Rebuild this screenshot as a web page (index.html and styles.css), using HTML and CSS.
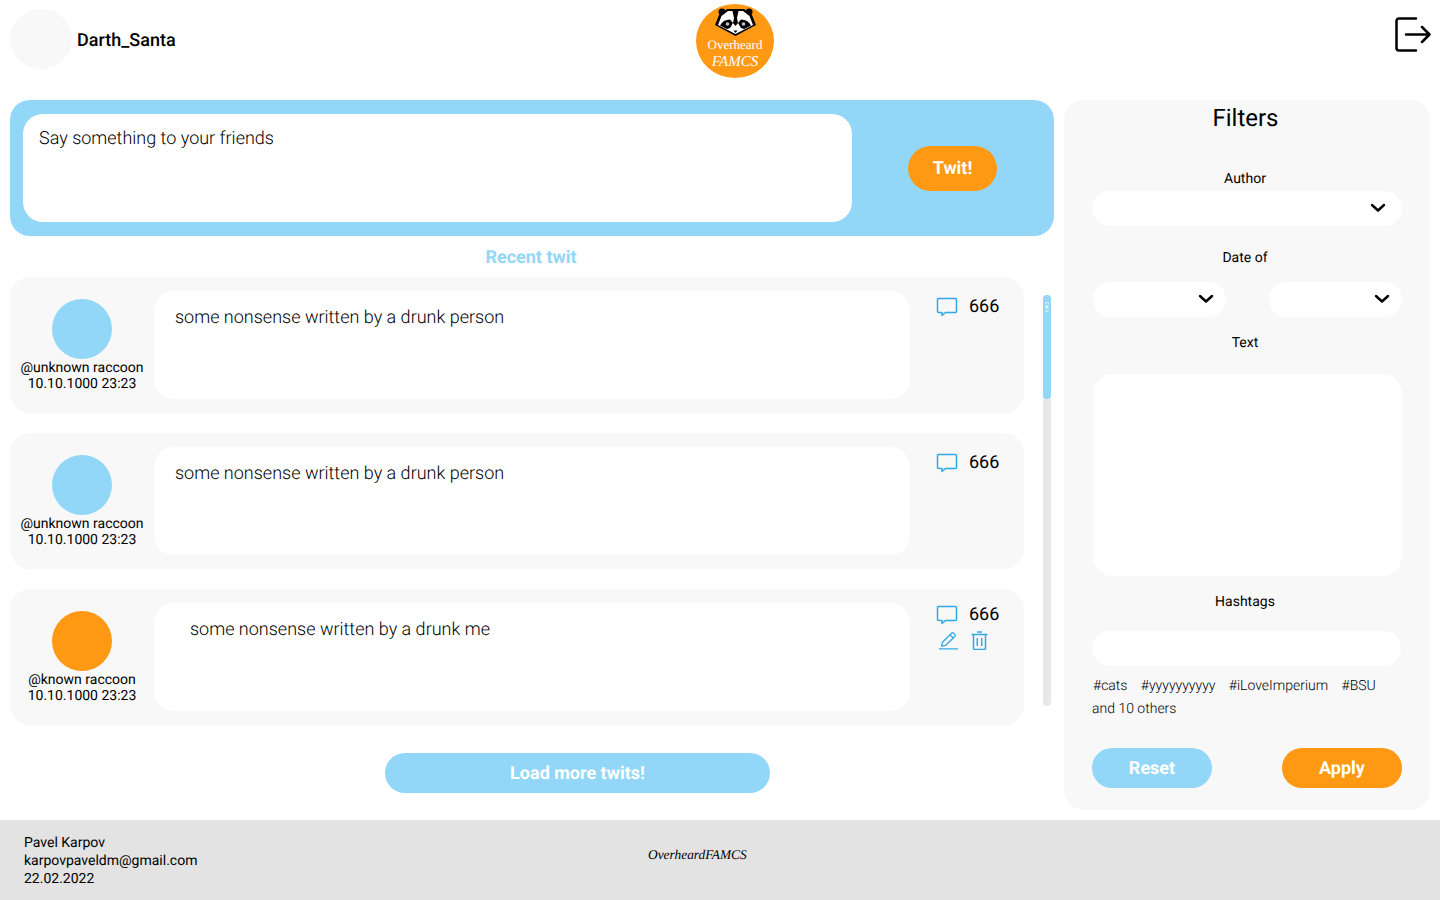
FILE: index.html
```html
<!DOCTYPE html>
<html lang="en">
<head>
<meta charset="utf-8">
<title>Overheard FAMCS</title>
<link rel="stylesheet" href="styles.css">
</head>
<body>
<svg class="defs" width="0" height="0" aria-hidden="true">
  <defs>
    <symbol id="i-comment" viewBox="0 0 22 20"><path d="M2.500 1.500h17a1 1 0 0 1 1 1v12a1 1 0 0 1-1 1H9.500l-3.500 3v-3H2.500a1 1 0 0 1-1-1v-12a1 1 0 0 1 1-1z" fill="none" stroke="#2fa9e6" stroke-width="1.500" stroke-linejoin="round"/></symbol>
    <symbol id="i-chev" viewBox="0 0 16 10"><path d="M2 2l6 5.500L14 2" fill="none" stroke="#000" stroke-width="2.400" stroke-linecap="round" stroke-linejoin="round"/></symbol>
  </defs>
</svg>
<header class="top">
  <div class="user"><div class="user-pic"></div><span class="user-name">Darth_Santa</span></div>
  <div class="logo">
    <svg class="logo-face" viewBox="0 0 41 29" width="41" height="29">
      <circle cx="7" cy="4" r="3.500" fill="#000"/><circle cx="34" cy="4" r="3.500" fill="#000"/>
      <path d="M4 7l8-6h17l8 6 4 10-20.500 11L0 17z" fill="#000"/>
      <path d="M6.500 8l6.500-5h15l6.500 5L38 17 20.500 26 3 17z" fill="#fff"/>
      <path d="M17 1h7l-2 9 1 5-2.500 3-2.500-3 1-5z" fill="#000"/>
      <path d="M5 17.500q3-6 10-6l3 3.500-3 5-3 1zM36 17.500q-3-6-10-6l-3 3.500 3 5 3 1z" fill="#000"/>
      <circle cx="12.500" cy="16" r="1.800" fill="#b9c6d2"/><circle cx="28.500" cy="16" r="1.800" fill="#b9c6d2"/>
      <path d="M18.500 22.500h4l-2 2.500z" fill="#000"/>
    </svg>
    <span class="logo-a">Overheard</span>
    <span class="logo-b">FAMCS</span>
  </div>
  <svg class="exit" viewBox="0 0 36 36" width="36" height="36"><path d="M21 1.500H4a2.500 2.500 0 0 0-2.500 2.500v27A2.500 2.500 0 0 0 4 33.500h17M11 17.500h23.500M27 10l7.500 7.500L27 25" fill="none" stroke="#000" stroke-width="2.500" stroke-linecap="round" stroke-linejoin="round"/></svg>
</header>
<main class="main">
  <section class="feed">
    <form class="composer">
      <div class="composer-box">Say something to your friends</div>
      <button class="btn btn-twit" type="button">Twit!</button>
    </form>
    <h2 class="recent">Recent twit</h2>
    <div class="list-wrap">
      <div class="list">
        <article class="card">
          <div class="who"><div class="pic pic-blue"></div><div class="who-text">@unknown raccoon<br>10.10.1000 23:23</div></div>
          <div class="msg">some nonsense written by a drunk person</div>
          <div class="side"><div class="count"><svg class="ico-c"><use href="#i-comment"/></svg><span>666</span></div></div>
        </article>
        <article class="card">
          <div class="who"><div class="pic pic-blue"></div><div class="who-text">@unknown raccoon<br>10.10.1000 23:23</div></div>
          <div class="msg">some nonsense written by a drunk person</div>
          <div class="side"><div class="count"><svg class="ico-c"><use href="#i-comment"/></svg><span>666</span></div></div>
        </article>
        <article class="card">
          <div class="who"><div class="pic pic-orange"></div><div class="who-text">@known raccoon<br>10.10.1000 23:23</div></div>
          <div class="msg msg-own">some nonsense written by a drunk me</div>
          <div class="side side-own"><div class="count"><svg class="ico-c"><use href="#i-comment"/></svg><span>666</span></div>
            <div class="tools">
              <svg class="ico-e" viewBox="0 0 20 19" width="20" height="19"><path d="M1 17.800h19M3.500 15.200l1-4L13.500 2.200a1.500 1.500 0 0 1 2.100 0l1.200 1.200a1.500 1.500 0 0 1 0 2.100L7.700 14.300zM12 3.800l3.300 3.300" fill="none" stroke="#2fa9e6" stroke-width="1.300" stroke-linejoin="round"/></svg>
              <svg class="ico-t" viewBox="0 0 17 19" width="17" height="19"><path d="M.5 3.500h16M6 1h5M2.500 3.500v13.700a1.300 1.300 0 0 0 1.300 1.300h9.400a1.300 1.300 0 0 0 1.300-1.300V3.500M6.300 7v8M10.700 7v8" fill="none" stroke="#2fa9e6" stroke-width="1.500"/></svg>
            </div>
          </div>
        </article>
      </div>
      <div class="scroll"><div class="thumb"><svg class="grip" viewBox="0 0 6 12" width="6" height="12"><path d="M1 3l2-2 2 2M1 9l2 2 2-2" fill="none" stroke="#e4f5fd" stroke-width="1"/><circle cx="3" cy="6" r="1.700" fill="#e4f5fd"/></svg></div></div>
    </div>
    <div class="more"><button class="btn btn-more" type="button">Load more twits!</button></div>
  </section>
  <aside class="filters">
    <h2 class="f-title">Filters</h2>
    <div class="f-label f-author">Author</div>
    <div class="pill pill-wide"><svg class="chev"><use href="#i-chev"/></svg></div>
    <div class="f-label f-date">Date of</div>
    <div class="date-row">
      <div class="pill pill-date"><svg class="chev"><use href="#i-chev"/></svg></div>
      <div class="pill pill-date"><svg class="chev"><use href="#i-chev"/></svg></div>
    </div>
    <div class="f-label f-text">Text</div>
    <div class="textbox"></div>
    <div class="f-label f-hash">Hashtags</div>
    <div class="pill pill-tag"></div>
    <div class="tags"><span>#cats</span><span>#yyyyyyyyyy</span><span>#iLoveImperium</span><span>#BSU</span></div>
    <div class="others">and 10 others</div>
    <div class="actions">
      <button class="btn btn-reset" type="button">Reset</button>
      <button class="btn btn-apply" type="button">Apply</button>
    </div>
  </aside>
</main>
<footer class="foot">
  <div class="foot-info">Pavel Karpov<br>karpovpaveldm@gmail.com<br>22.02.2022</div>
  <div class="foot-brand">OverheardFAMCS</div>
</footer>
</body>
</html>
```
FILE: styles.css
```css
* { box-sizing: border-box; }
html, body { margin: 0; padding: 0; }
body { width: 1440px; height: 900px; overflow: hidden; background: #fff; font-family: Roboto, sans-serif; color: #000; display: flex; flex-direction: column; text-rendering: geometricPrecision; }
.defs { position: absolute; }
.top { height: 100px; flex: none; display: flex; justify-content: space-between; align-items: flex-start; padding: 0 9px 0 10px; position: relative; }
.user { display: flex; align-items: center; margin-top: 9px; }
.user-pic { width: 62px; height: 60px; border-radius: 50%; background: #f8f8f8; }
.user-name { margin: 2px 0 0 5px; font-size: 18px; font-weight: 500; }
.logo { position: absolute; left: 696px; top: 4px; width: 78px; height: 74px; border-radius: 50%; background: #ff9914; display: flex; flex-direction: column; align-items: center; color: #fff; font-family: "Liberation Serif", serif; }
.logo-face { margin-top: 4px; flex: none; }
.logo-a { font-size: 13px; line-height: 14px; margin-top: 1px; }
.logo-b { font-size: 15px; line-height: 17px; margin-top: 2px; font-style: italic; }
.exit { margin-top: 17px; }
.main { flex: none; height: 720px; display: flex; align-items: flex-start; padding: 0 10px; gap: 10px; }
.feed { width: 1044px; flex: none; }
.composer { height: 136px; border-radius: 20px; background: #92d7f7; display: flex; align-items: center; padding: 0 57px 0 13px; justify-content: space-between; }
.composer-box { width: 829px; height: 108px; background: #fff; border-radius: 20px; padding: 14px 16px; font-size: 18px; font-weight: 300; line-height: 22px; }
.btn { border: 0; color: #fff; font-family: Roboto, sans-serif; font-weight: 700; font-size: 18px; padding: 0; text-rendering: geometricPrecision; }
.btn-twit { width: 89px; height: 45px; border-radius: 23px; background: #ff9914; padding-top: 1px; }
.recent { margin: 0; height: 41px; font-size: 18px; line-height: 44px; font-weight: 700; color: #92d7f7; text-align: center; padding-right: 2px; }
.list-wrap { display: flex; align-items: flex-start; }
.list { width: 1014px; display: flex; flex-direction: column; gap: 20px; }
.card { height: 136px; background: #f8f8f8; border-radius: 20px; display: flex; position: relative; }
.who { width: 144px; flex: none; padding-top: 22px; display: flex; flex-direction: column; align-items: center; }
.pic { width: 60px; height: 60px; border-radius: 50%; }
.pic-blue { background: #92d7f7; }
.pic-orange { background: #ff9914; }
.who-text { padding-top: 1px; font-size: 14px; line-height: 16px; text-align: center; white-space: nowrap; }
.msg { width: 756px; height: 108px; margin-top: 14px; background: #fff; border-radius: 20px; padding: 15px 21px; font-size: 18px; font-weight: 300; line-height: 24px; flex: none; }
.msg-own { padding-left: 36px; }
.side { margin-left: 26px; padding-top: 19px; }
.side-own { padding-top: 15px; }
.count { display: flex; align-items: center; height: 20px; font-size: 18px; gap: 11px; }
.ico-c { width: 22px; height: 20px; margin-top: 2px; }
.tools { display: flex; align-items: flex-start; gap: 13px; margin-top: 7px; padding-left: 2px; }
.scroll { width: 8px; height: 411px; margin: 18px 0 0 19px; border-radius: 4px; background: #e8e8e8; flex: none; }
.thumb { height: 104px; border-radius: 4px; background: #92d7f7; padding-top: 6px; display: flex; justify-content: center; align-items: flex-start; }
.more { display: flex; justify-content: center; padding: 28px 0 0 91px; }
.btn-more { width: 385px; height: 40px; border-radius: 20px; background: #92d7f7; }
.filters { width: 366px; height: 710px; flex: none; background: #f8f8f8; border-radius: 20px; padding: 0 28px; position: relative; }
.f-title { margin: 0; padding-top: 3px; height: 62px; font-size: 24px; line-height: 30px; font-weight: 400; text-align: center; padding-right: 3px; }
.f-label { height: 16px; font-size: 14px; line-height: 18px; text-align: center; padding-right: 4px; }
.f-author { margin-top: 8px; }
.pill { background: #fff; border-radius: 18px; height: 35px; display: flex; align-items: center; justify-content: flex-end; }
.pill-wide { margin-top: 5px; padding-right: 16px; }
.chev { width: 16px; height: 10px; margin-bottom: 1px; }
.f-date { margin-top: 23px; }
.date-row { display: flex; justify-content: space-between; padding-left: 1px; margin-top: 17px; }
.pill-date { width: 133px; padding-right: 12px; }
.f-text { margin-top: 17px; }
.textbox { margin: 24px 0 0 1px; height: 202px; background: #fff; border-radius: 20px; }
.f-hash { margin-top: 17px; }
.pill-tag { margin-top: 22px; width: 309px; }
.tags { display: flex; gap: 13.3px; height: 18px; margin-top: 10px; padding-left: 1px; font-size: 14px; line-height: 20px; font-weight: 300; }
.others { height: 18px; margin-top: 5px; font-size: 14px; line-height: 20px; font-weight: 300; }
.actions { display: flex; justify-content: space-between; margin-top: 31px; }
.btn-reset, .btn-apply { width: 120px; height: 40px; border-radius: 20px; }
.btn-reset { background: #92d7f7; }
.btn-apply { background: #ff9914; }
.foot { flex: none; height: 80px; background: #e3e3e3; display: flex; align-items: center; padding-left: 24px; position: relative; }
.foot-info { padding-top: 2px; font-size: 14px; line-height: 18px; }
.foot-brand { position: absolute; left: 648px; top: 26px; font-family: "Liberation Serif", serif; font-style: italic; font-size: 13.4px; line-height: 18px; }
```
